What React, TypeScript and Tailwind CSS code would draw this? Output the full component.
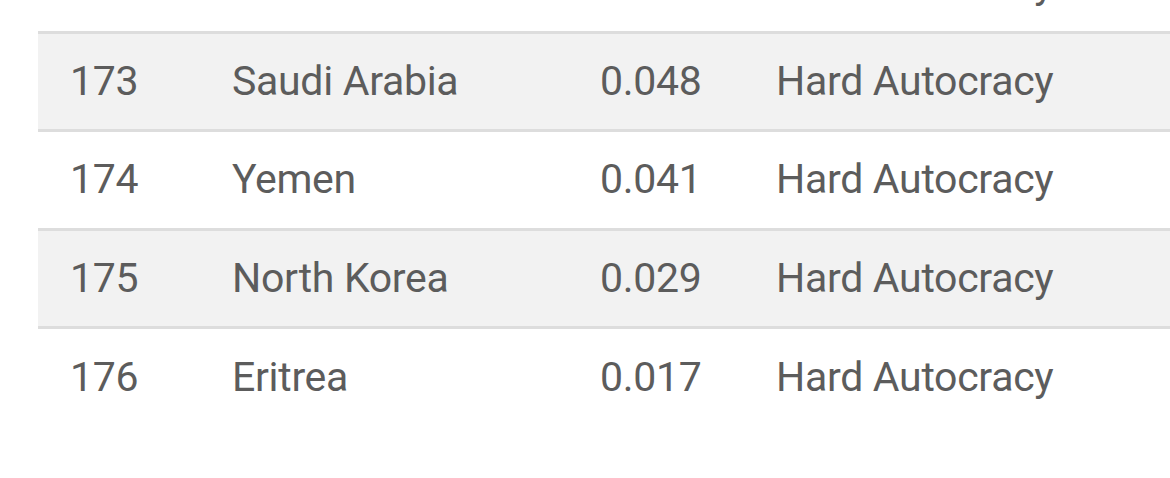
const rows = [
  { rank: "173", country: "Saudi Arabia", score: "0.048", type: "Hard Autocracy" },
  { rank: "174", country: "Yemen", score: "0.041", type: "Hard Autocracy" },
  { rank: "175", country: "North Korea", score: "0.029", type: "Hard Autocracy" },
  { rank: "176", country: "Eritrea", score: "0.017", type: "Hard Autocracy" },
];

export default function App() {
  return (
    <div className="relative h-[478px] w-[1170px] overflow-hidden bg-white font-['Roboto',sans-serif] text-[41px] tracking-[-0.3px] text-[#5c5c5c]">
      <table className="ml-[38px] mt-[-65px] w-[1200px] table-fixed border-collapse">
        <colgroup>
          <col className="w-[162px]" />
          <col className="w-[368px]" />
          <col className="w-[176px]" />
          <col />
        </colgroup>
        <tbody>
          {/* previous row, only the tail of its text shows at the top */}
          <tr className="h-[97px] bg-white">
            <td className="pl-8" />
            <td className="pl-8" />
            <td className="pl-8" />
            <td className="pl-8 pt-[3px] align-middle">Hard Autocracy</td>
          </tr>
          {rows.map((r, i) => (
            <tr
              key={r.rank}
              className={`h-[98.5px] border-t-[3px] border-[#dddddd] ${i % 2 === 0 ? "bg-[#f2f2f2]" : "bg-white"}`}
            >
              <td className="pl-8 align-middle">{r.rank}</td>
              <td className="pl-8 align-middle">{r.country}</td>
              <td className="pl-8 align-middle">{r.score}</td>
              <td className="pl-8 align-middle">{r.type}</td>
            </tr>
          ))}
        </tbody>
      </table>
    </div>
  );
}
